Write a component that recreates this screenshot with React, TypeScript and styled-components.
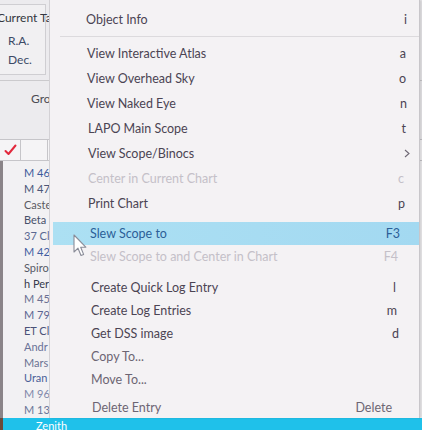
import React from 'react';
import styled, { createGlobalStyle } from 'styled-components';

const Global = createGlobalStyle`
  html, body { margin: 0; padding: 0; }
  body {
    width: 422px; height: 430px; overflow: hidden;
    background: #ecebed;
    font-family: Lato, "Noto Sans", sans-serif;
  }
`;

const Screen = styled.div`
  position: relative;
  width: 422px;
  height: 430px;
  overflow: hidden;
  background: #ecebee;
  display: flex;
  flex-direction: column;
`;

/* ---------- background window ---------- */

const InfoBox = styled.div`
  margin-top: 4px;
  width: 45px;
  height: 69px;
  border: 1px solid #cfced2;
  border-left: none;
  background: #f1f0f2;
  display: flex;
  flex-direction: column;
  font-size: 12px;
  color: #3a3f4c;
`;

const InfoTitle = styled.div`
  margin: 6px 0 0 -3px;
  line-height: 14px;
  white-space: nowrap;
  color: #333640;
`;

const InfoLabel = styled.div<{ $top: number }>`
  margin: ${p => p.$top}px 0 0 8px;
  line-height: 14px;
  color: #3c4a66;
`;

const Rule = styled.div`
  margin-top: 5px;
  height: 1px;
  background: #cbcacd;
`;

const GroupArea = styled.div`
  height: 58px;
  padding: 11px 0 0 31px;
  box-sizing: border-box;
  font-size: 12px;
  line-height: 14px;
  color: #4a4a52;
`;

const HeaderRow = styled.div`
  height: 20px;
  border-top: 1px solid #c6c5c9;
  border-bottom: 1px solid #c6c5c9;
  background: #f5f4f6;
  display: grid;
  grid-template-columns: 21px 27px 1fr;
`;

const HeaderCell = styled.div`
  border-right: 1px solid #c6c5c9;
  display: flex;
  align-items: center;
  justify-content: center;
`;

const ListArea = styled.div`
  flex: 1;
  display: flex;
  flex-direction: column;
  padding-top: 4px;
  background: #f2f1f3;
  border-left: 3px solid #8a8488;
  box-sizing: border-box;
`;

const ListRow = styled.div<{ $color: string }>`
  height: 15.8px;
  line-height: 15.8px;
  padding-left: 21px;
  font-size: 11px;
  color: ${p => p.$color};
  white-space: nowrap;
`;

const SelectedRow = styled.div`
  height: 12px;
  background: #1fc1ea;
  padding-left: 33px;
  font-size: 11px;
  line-height: 16px;
  color: #ffffff;
  border-left: 3px solid #6a4a3a;
  overflow: hidden;
  white-space: nowrap;
`;

/* ---------- context menu ---------- */

const Menu = styled.div`
  position: absolute;
  left: 49px;
  top: 0;
  width: 371px;
  height: 418px;
  box-sizing: border-box;
  padding-top: 7px;
  background: #f4f2f4;
  border-left: 1px solid #d3d1d5;
  border-right: 1px solid #c8c6ca;
  box-shadow: 2px 0 2px rgba(0, 0, 0, 0.12);
  display: flex;
  flex-direction: column;
  font-family: Lato, "Noto Sans", sans-serif;
  font-size: 12.5px;
`;

const Item = styled.div<{ $h: number; $x: number; $hl?: boolean }>`
  height: ${p => p.$h}px;
  margin-left: 3px;
  padding-left: ${p => p.$x - 3}px;
  display: flex;
  align-items: center;
  justify-content: space-between;
  background: ${p => (p.$hl ? 'linear-gradient(90deg, #ace0f3, #a3d9f1)' : 'transparent')};
`;

const tone = (dis?: boolean, hl?: boolean, soft?: boolean) =>
  dis ? '#c4c0c8' : hl ? '#2c5f98' : soft ? '#6c6573' : '#4b4453';

const Label = styled.span<{ $dis?: boolean; $hl?: boolean; $soft?: boolean }>`
  color: ${p => tone(p.$dis, p.$hl, p.$soft)};
  white-space: nowrap;
`;

const Key = styled.span<{ $r: number; $dis?: boolean; $hl?: boolean; $soft?: boolean }>`
  padding-right: ${p => p.$r}px;
  color: ${p => tone(p.$dis, p.$hl, p.$soft)};
  white-space: nowrap;
`;

const Sep = styled.div<{ $h: number; $line?: boolean }>`
  height: ${p => p.$h}px;
  margin-left: 10px;
  display: flex;
  align-items: center;
  &::after {
    content: '';
    flex: 1;
    height: 1px;
    background: ${p => (p.$line ? '#dcdadd' : 'transparent')};
  }
`;

const Cursor = styled.svg`
  position: absolute;
  left: 73px;
  top: 234px;
`;

type Entry =
  | { sep: true; h: number; line?: boolean }
  | {
      sep?: false;
      label: string;
      k?: string;
      h: number;
      x: number;
      r: number;
      dis?: boolean;
      hl?: boolean;
      soft?: boolean;
      sub?: boolean;
    };

const entries: Entry[] = [
  { label: 'Object Info', k: 'i', h: 24, x: 36, r: 12 },
  { sep: true, h: 10, line: true },
  { label: 'View Interactive Atlas', k: 'a', h: 25, x: 37, r: 13 },
  { label: 'View Overhead Sky', k: 'o', h: 25, x: 37, r: 13 },
  { label: 'View Naked Eye', k: 'n', h: 25, x: 37, r: 12 },
  { label: 'LAPO Main Scope', k: 't', h: 25, x: 38, r: 13 },
  { label: 'View Scope/Binocs', sub: true, h: 25, x: 38, r: 9 },
  { label: 'Center in Current Chart', k: 'c', dis: true, h: 25, x: 38, r: 15 },
  { label: 'Print Chart', k: 'p', h: 25, x: 38, r: 14 },
  { sep: true, h: 6 },
  { label: 'Slew Scope to', k: 'F3', hl: true, h: 23, x: 40, r: 19 },
  { label: 'Slew Scope to and Center in Chart', k: 'F4', dis: true, h: 23, x: 40, r: 21 },
  { sep: true, h: 8 },
  { label: 'Create Quick Log Entry', k: 'l', h: 23, x: 41, r: 23 },
  { label: 'Create Log Entries', k: 'm', h: 23, x: 41, r: 22 },
  { label: 'Get DSS image', k: 'd', h: 23, x: 41, r: 20 },
  { label: 'Copy To...', soft: true, h: 23, x: 41, r: 20 },
  { label: 'Move To...', soft: true, h: 23, x: 41, r: 20 },
  { sep: true, h: 6 },
  { label: 'Delete Entry', k: 'Delete', soft: true, h: 21, x: 42, r: 27 },
];

const listItems: [string, string][] = [
  ['M 46', '#3c5b9c'],
  ['M 47', '#4a5678'],
  ['Caste', '#5a5a62'],
  ['Beta', '#47506a'],
  ['37 Cl', '#5a6892'],
  ['M 42', '#3f5ea2'],
  ['Spiro', '#575a66'],
  ['h Per', '#363a4c'],
  ['M 45', '#6a7092'],
  ['M 79', '#5b6592'],
  ['ET Cl', '#4a5278'],
  ['Andr', '#6a7298'],
  ['Mars', '#6a7292'],
  ['Uran', '#4a5f98'],
  ['M 96', '#8088aa'],
  ['M 13', '#6a7598'],
];

export default function App() {
  return (
    <Screen>
      <Global />
      <InfoBox>
        <InfoTitle>Current Target</InfoTitle>
        <InfoLabel $top={9}>R.A.</InfoLabel>
        <InfoLabel $top={5}>Dec.</InfoLabel>
      </InfoBox>
      <Rule />
      <GroupArea>Group</GroupArea>
      <HeaderRow>
        <HeaderCell>
          <svg width="13" height="12" viewBox="0 0 13 12">
            <path d="M1.5 7 L4.5 10 L11.5 1.5" fill="none" stroke="#e2283c" strokeWidth="2" strokeLinecap="round" strokeLinejoin="round" />
          </svg>
        </HeaderCell>
        <HeaderCell />
      </HeaderRow>
      <ListArea>
        {listItems.map(([t, c]) => (
          <ListRow key={t} $color={c}>{t}</ListRow>
        ))}
      </ListArea>
      <SelectedRow>Zenith</SelectedRow>

      <Menu>
        {entries.map((e, i) =>
          e.sep ? (
            <Sep key={i} $h={e.h} $line={e.line} />
          ) : (
            <Item key={i} $h={e.h} $x={e.x} $hl={e.hl}>
              <Label $dis={e.dis} $hl={e.hl} $soft={e.soft}>{e.label}</Label>
              {e.sub ? (
                <Key $r={e.r}>
                  <svg width="6" height="9" viewBox="0 0 6 9">
                    <path d="M1 1 L5 4.5 L1 8" fill="none" stroke="#6e6874" strokeWidth="1.1" />
                  </svg>
                </Key>
              ) : (
                <Key $r={e.r} $dis={e.dis} $hl={e.hl} $soft={e.soft}>{e.k ?? ''}</Key>
              )}
            </Item>
          )
        )}
      </Menu>

      <Cursor width="16" height="24" viewBox="0 0 16 24">
        <path
          d="M1 1 L1 18 L5 14.2 L8 21.5 L10.6 20.4 L7.7 13.2 L12.8 13.2 Z"
          fill="#ffffff"
          stroke="#8a8c98"
          strokeWidth="1.1"
          strokeLinejoin="round"
        />
      </Cursor>
    </Screen>
  );
}
